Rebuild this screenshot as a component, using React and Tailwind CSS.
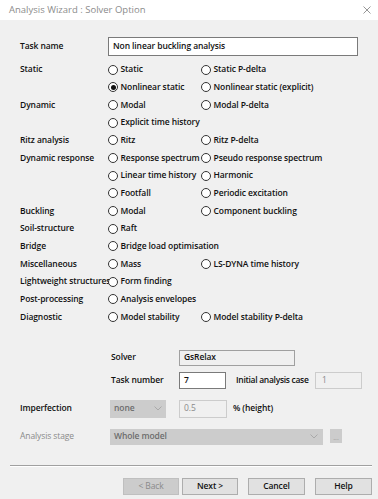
import React from "react";

function Radio({ label, checked }) {
  return (
    <div className="flex items-center whitespace-nowrap">
      <span className="relative flex h-[10px] w-[10px] shrink-0 items-center justify-center rounded-full border border-[#333333] bg-white">
        {checked && <span className="h-[5px] w-[5px] rounded-full bg-[#111111]" />}
      </span>
      <span className="ml-[2.5px]">{label}</span>
    </div>
  );
}

function Row({ label, a, b, checkedA }) {
  return (
    <div className="flex h-[17.67px] items-center">
      <div className="w-[88px] shrink-0 whitespace-nowrap">{label}</div>
      <div className="w-[92px] shrink-0">{a && <Radio label={a} checked={checkedA} />}</div>
      <div className="pl-[1px]">{b && <Radio label={b} />}</div>
    </div>
  );
}

function Chevron({ color = "#9a9a9a" }) {
  return (
    <svg width="8" height="5" viewBox="0 0 8 5" fill="none">
      <path d="M0.5 0.5 L4 4 L7.5 0.5" stroke={color} strokeWidth="0.9" />
    </svg>
  );
}

export default function App() {
  const rows = [
    ["Static", "Static", "Static P-delta"],
    ["", "Nonlinear static", "Nonlinear static (explicit)", true],
    ["Dynamic", "Modal", "Modal P-delta"],
    ["", "Explicit time history", ""],
    ["Ritz analysis", "Ritz", "Ritz P-delta"],
    ["Dynamic response", "Response spectrum", "Pseudo response spectrum"],
    ["", "Linear time history", "Harmonic"],
    ["", "Footfall", "Periodic excitation"],
    ["Buckling", "Modal", "Component buckling"],
    ["Soil-structure", "Raft", ""],
    ["Bridge", "Bridge load optimisation", ""],
    ["Miscellaneous", "Mass", "LS-DYNA time history"],
    ["Lightweight structures", "Form finding", ""],
    ["Post-processing", "Analysis envelopes", ""],
    ["Diagnostic", "Model stability", "Model stability P-delta"],
  ];
  return (
    <div
      className="relative h-[499px] w-[378px] overflow-hidden bg-[#f0f0f0] text-[8.5px] font-semibold tracking-[-0.1px] text-[#111111]"
      style={{ fontFamily: '"Open Sans", "Noto Sans", sans-serif' }}
    >
      {/* Title bar */}
      <div className="flex h-[20px] items-center justify-between bg-white pl-[9px] pr-[6px]">
        <span className="text-[9.5px] font-normal tracking-normal text-[#8c8c8c]">Analysis Wizard : Solver Option</span>
        <svg width="8" height="8" viewBox="0 0 8 8" className="mr-[1px]">
          <path d="M0.5 0.5 L7.5 7.5 M7.5 0.5 L0.5 7.5" stroke="#8a8a8a" strokeWidth="0.9" />
        </svg>
      </div>

      <div className="pl-[20px]">
        {/* Task name */}
        <div className="mt-[17px] flex h-[19px] items-center">
          <div className="w-[88px] shrink-0">Task name</div>
          <div className="flex h-[19px] w-[250px] items-center border border-[#7a7a7a] bg-white pl-[4px]">
            Non linear buckling analysis
          </div>
        </div>

        <div className="mt-[5px]">
          {rows.map((r, i) => (
            <Row key={i} label={r[0]} a={r[1]} b={r[2]} checkedA={r[3]} />
          ))}
        </div>

        {/* Solver */}
        <div className="mt-[24px] flex h-[16px] items-center pl-[91px]">
          <div className="w-[68px] shrink-0">Solver</div>
          <div className="flex h-[16px] w-[116px] items-center border border-[#a0a0a0] bg-[#f0f0f0] pl-[4px]">GsRelax</div>
        </div>

        {/* Task number */}
        <div className="mt-[6px] flex h-[17px] items-center pl-[91px]">
          <div className="w-[68px] shrink-0">Task number</div>
          <div className="flex h-[17px] w-[47px] items-center border border-[#7a7a7a] bg-white pl-[4px]">7</div>
          <div className="ml-[10px] w-[79px] shrink-0 whitespace-nowrap tracking-[-0.3px]">Initial analysis case</div>
          <div className="flex h-[17px] w-[47px] items-center border border-[#cccccc] bg-[#f0f0f0] pl-[6px] font-normal text-[#8a8a8a]">1</div>
        </div>

        {/* Imperfection */}
        <div className="mt-[11px] flex h-[18px] items-center">
          <div className="w-[90px] shrink-0">Imperfection</div>
          <div className="flex h-[18px] w-[56px] items-center justify-between bg-[#cccccc] pl-[4px] pr-[4px] text-[#6d6d6d]">
            <span>none</span>
            <Chevron color="#a5a5a5" />
          </div>
          <div className="ml-[13px] flex h-[18px] w-[48px] items-center border border-[#cccccc] bg-[#f0f0f0] pl-[4px] font-normal text-[#8a8a8a]">0.5</div>
          <div className="ml-[6px]">% (height)</div>
        </div>

        {/* Analysis stage */}
        <div className="mt-[11px] flex h-[16px] items-center">
          <div className="w-[90px] shrink-0 font-normal text-[#8a8a8a]">Analysis stage</div>
          <div className="flex h-[16px] w-[213px] items-center justify-between bg-[#cccccc] pl-[4px] pr-[5px] text-[#6d6d6d]">
            <span>Whole model</span>
            <Chevron color="#a5a5a5" />
          </div>
          <div className="ml-[7px] flex h-[14px] w-[12px] items-center justify-center self-start bg-[#cccccc] pt-[3px] text-[7px] font-normal leading-none tracking-normal text-[#9a9a9a]">...</div>
        </div>
      </div>

      {/* Separator */}
      <div className="ml-[10px] mt-[20px] w-[362px] border-t border-b border-t-[#a0a0a0] border-b-white" />

      {/* Buttons */}
      <div className="mt-[11px] flex items-center pl-[123px]">
        <div className="flex h-[17px] w-[56px] items-center justify-center border border-[#bfbfbf] bg-[#cccccc] font-normal text-[#8a8a8a]">&lt; Back</div>
        <div className="ml-[3px] flex h-[17px] w-[56px] items-center justify-center border border-[#adadad] bg-[#e1e1e1]">Next &gt;</div>
        <div className="ml-[10px] flex h-[17px] w-[57px] items-center justify-center border border-[#adadad] bg-[#e1e1e1]">Cancel</div>
        <div className="ml-[10px] flex h-[17px] w-[57px] items-center justify-center border border-[#adadad] bg-[#e1e1e1]">Help</div>
      </div>
    </div>
  );
}
